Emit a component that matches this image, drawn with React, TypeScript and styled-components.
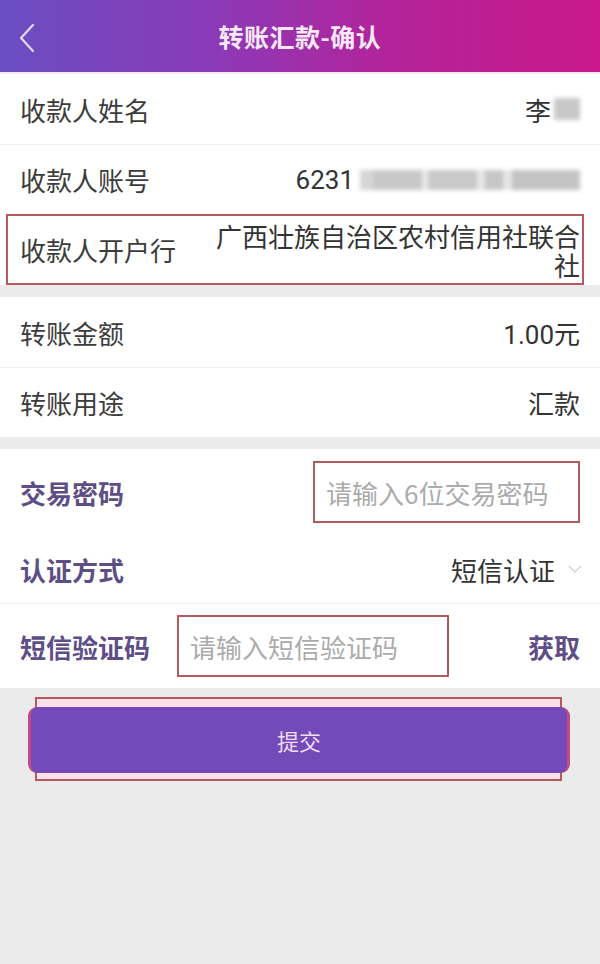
import styled, { createGlobalStyle } from 'styled-components'

const Global = createGlobalStyle`
  html, body {
    margin: 0;
    padding: 0;
    background: #ebebeb;
    font-family: "Noto Sans CJK SC", "Noto Sans", sans-serif;
  }
`

const Page = styled.div`
  width: 600px;
  min-height: 964px;
  background: #ebebeb;
`

const Header = styled.header`
  position: relative;
  height: 72px;
  display: flex;
  align-items: center;
  justify-content: center;
  background: linear-gradient(90deg, #6a4ec2 0%, #8a3ab8 35%, #b4239a 65%, #c9188a 100%);
  border-bottom: 2px solid #f6e9f6;
`

const Back = styled.svg`
  position: absolute;
  left: 18px;
  top: 23px;
`

const Title = styled.h1`
  margin: 0;
  font-size: 25px;
  font-weight: 700;
  color: #f6e8f6;
  letter-spacing: 0.5px;
`

const Section = styled.section`
  background: #fff;
  & + & {
    margin-top: 12px;
  }
`

const Row = styled.div<{ h: number; line?: boolean }>`
  display: flex;
  align-items: center;
  justify-content: space-between;
  height: ${p => p.h}px;
  padding: 0 20px;
  box-sizing: border-box;
  border-bottom: ${p => (p.line ? '1px solid #efefef' : 'none')};
`

const Marked = styled.div`
  display: flex;
  align-items: center;
  justify-content: space-between;
  height: 71px;
  margin: 0 16px 0 6px;
  padding: 0 0 0 12px;
  box-sizing: border-box;
  border: 2px solid #b25a5e;
`

const Label = styled.span<{ strong?: boolean }>`
  font-size: 26px;
  white-space: nowrap;
  color: ${p => (p.strong ? '#5d4e86' : '#3c3c3c')};
  font-weight: ${p => (p.strong ? 700 : 400)};
`

const Value = styled.span`
  font-size: 26px;
  color: #333;
  display: flex;
  align-items: center;
  font-family: Roboto, "Noto Sans CJK SC", sans-serif;
`

const BankName = styled.span`
  font-size: 26px;
  color: #333;
  text-align: right;
  line-height: 29px;
  width: 376px;
  margin-right: 2px;
`

const Blur = styled.span<{ w: number }>`
  display: inline-block;
  width: ${p => p.w}px;
  height: 22px;
  margin-left: 3px;
  background: #c8c8c8;
  filter: blur(2px);
`

const AccountBlur = styled.span`
  display: inline-block;
  width: 220px;
  height: 20px;
  margin-left: 6px;
  filter: blur(2px);
  background: linear-gradient(
    90deg,
    #d6d6d6 0 6%,
    #c8c8c8 6% 28%,
    #e8e8e8 28% 31%,
    #c9c9c9 31% 53%,
    #e6e6e6 53% 57%,
    #c6c6c6 57% 65%,
    #e6e6e6 65% 69%,
    #c3c3c3 69% 100%
  );
`

const InputBox = styled.div<{ w: number; ml?: number }>`
  display: flex;
  align-items: center;
  width: ${p => p.w}px;
  height: 62px;
  margin-left: ${p => p.ml ?? 0}px;
  padding-left: 11px;
  box-sizing: border-box;
  border: 2px solid #b25a5e;
  font-size: 26px;
  color: #ababab;
  white-space: nowrap;
`

const Select = styled.span`
  display: flex;
  align-items: center;
  gap: 13px;
  font-size: 26px;
  color: #333;
  margin-right: -2px;
`

const Fetch = styled.span`
  margin-left: auto;
  font-size: 26px;
  font-weight: 700;
  color: #5d4e86;
`

const Footer = styled.div`
  padding: 9px 0 0 35px;
`

const Frame = styled.div`
  width: 527px;
  padding: 8px 0 6px;
  box-sizing: border-box;
  border: 2px solid #b25a5e;
  background: #fbe0ec;
`

const Submit = styled.button`
  display: flex;
  align-items: center;
  justify-content: center;
  width: 542px;
  height: 66px;
  margin-left: -9px;
  border: none;
  border-left: 3px solid #c24a86;
  border-right: 3px solid #c24a86;
  border-radius: 9px;
  background: #7449b8;
  color: #efdcf6;
  font-size: 22px;
  font-family: "Noto Sans CJK SC", sans-serif;
`

export default function App() {
  return (
    <Page>
      <Global />
      <Header>
        <Back width="18" height="30" viewBox="0 0 18 30">
          <path d="M15 2 L3 15 L15 28" fill="none" stroke="#e6d9f4" strokeWidth="2.2" strokeLinecap="round" strokeLinejoin="round" />
        </Back>
        <Title>转账汇款-确认</Title>
      </Header>

      <Section>
        <Row h={71} line>
          <Label>收款人姓名</Label>
          <Value>李<Blur w={26} /></Value>
        </Row>
        <Row h={69}>
          <Label>收款人账号</Label>
          <Value>6231<AccountBlur /></Value>
        </Row>
        <Marked>
          <Label>收款人开户行</Label>
          <BankName>广西壮族自治区农村信用社联合社</BankName>
        </Marked>
      </Section>

      <Section>
        <Row h={71} line>
          <Label>转账金额</Label>
          <Value>1.00元</Value>
        </Row>
        <Row h={69}>
          <Label>转账用途</Label>
          <Value>汇款</Value>
        </Row>
      </Section>

      <Section>
        <Row h={86}>
          <Label strong>交易密码</Label>
          <InputBox w={267}>请输入6位交易密码</InputBox>
        </Row>
        <Row h={69} line>
          <Label strong>认证方式</Label>
          <Select>
            短信认证
            <svg width="14" height="10" viewBox="0 0 14 10">
              <path d="M1 2 L7 8 L13 2" fill="none" stroke="#d4d4d4" strokeWidth="1.5" />
            </svg>
          </Select>
        </Row>
        <Row h={84}>
          <Label strong>短信验证码</Label>
          <InputBox w={272} ml={27}>请输入短信验证码</InputBox>
          <Fetch>获取</Fetch>
        </Row>
      </Section>

      <Footer>
        <Frame>
          <Submit>提交</Submit>
        </Frame>
      </Footer>
    </Page>
  )
}
